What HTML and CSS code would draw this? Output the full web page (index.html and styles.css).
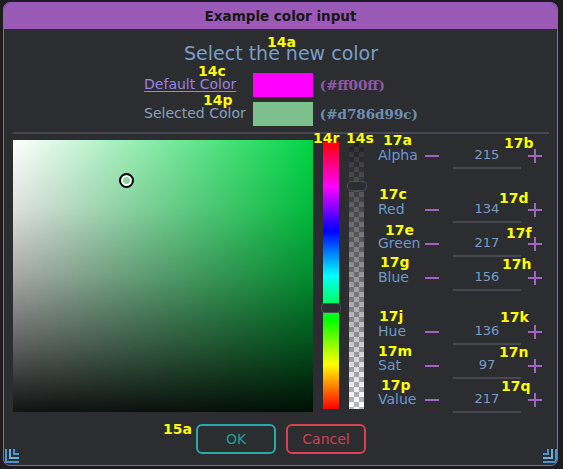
FILE: index.html
```html
<!DOCTYPE html>
<html>
<head>
<meta charset="utf-8">
<link rel="stylesheet" href="styles.css">
</head>
<body>
<div class="window">
  <div class="titlebar">Example color input</div>
  <div class="content">
    <div class="heading">Select the new color</div>
    <div class="compare">
      <a class="link">Default Color</a>
      <div class="swatch magenta"></div>
      <div class="hex hex-default">(#ff00ff)</div>
      <div class="sel-label">Selected Color</div>
      <div class="swatch selected"></div>
      <div class="hex hex-selected">(#d786d99c)</div>
    </div>
    <div class="sep"></div>
    <div class="main">
      <div class="picker"><div class="marker"></div></div>
      <div class="hue"><div class="handle hue-handle"></div></div>
      <div class="alpha"><div class="handle alpha-handle"></div></div>
      <div class="sliders">
        <div class="row"><span class="lbl">Alpha</span><span class="minus"></span><span class="val">215</span><span class="plus"></span></div>
        <div class="row group"><span class="lbl">Red</span><span class="minus"></span><span class="val">134</span><span class="plus"></span></div>
        <div class="row"><span class="lbl">Green</span><span class="minus"></span><span class="val">217</span><span class="plus"></span></div>
        <div class="row"><span class="lbl">Blue</span><span class="minus"></span><span class="val">156</span><span class="plus"></span></div>
        <div class="row group"><span class="lbl">Hue</span><span class="minus"></span><span class="val">136</span><span class="plus"></span></div>
        <div class="row"><span class="lbl">Sat</span><span class="minus"></span><span class="val">97</span><span class="plus"></span></div>
        <div class="row"><span class="lbl">Value</span><span class="minus"></span><span class="val">217</span><span class="plus"></span></div>
      </div>
    </div>
    <div class="buttons">
      <button class="btn ok">OK</button>
      <button class="btn cancel">Cancel</button>
    </div>
  </div>
  <svg class="grip grip-left" width="14" height="14" viewBox="0 0 14 14">
    <path d="M1 0V13H14" fill="none" stroke="#4f93cc" stroke-width="2"/>
    <path d="M5 0V9H14" fill="none" stroke="#6aaedf" stroke-width="2"/>
    <path d="M9 0V5H14" fill="none" stroke="#4f93cc" stroke-width="2"/>
  </svg>
  <svg class="grip grip-right" width="14" height="14" viewBox="0 0 14 14">
    <path d="M13 0V13H0" fill="none" stroke="#4f93cc" stroke-width="2"/>
    <path d="M9 0V9H0" fill="none" stroke="#6aaedf" stroke-width="2"/>
    <path d="M5 0V5H0" fill="none" stroke="#4f93cc" stroke-width="2"/>
  </svg>
</div>

<div class="notes">
  <span class="note n14a">14a</span>
  <span class="note n14c">14c</span>
  <span class="note n14p">14p</span>
  <span class="note n14r">14r</span>
  <span class="note n14s">14s</span>
  <span class="note n17a">17a</span>
  <span class="note n17b">17b</span>
  <span class="note n17c">17c</span>
  <span class="note n17d">17d</span>
  <span class="note n17e">17e</span>
  <span class="note n17f">17f</span>
  <span class="note n17g">17g</span>
  <span class="note n17h">17h</span>
  <span class="note n17j">17j</span>
  <span class="note n17k">17k</span>
  <span class="note n17m">17m</span>
  <span class="note n17n">17n</span>
  <span class="note n17p">17p</span>
  <span class="note n17q">17q</span>
  <span class="note n15a">15a</span>
</div>
</body>
</html>
```

FILE: styles.css
```css
* { box-sizing: border-box; }

html, body { margin: 0; }

body {
  position: relative;
  width: 563px;
  height: 469px;
  overflow: hidden;
  padding: 2px 0 0 3px;
  background: #1c1d20;
  font-family: "DejaVu Sans", sans-serif;
}

.window {
  position: relative;
  width: 555px;
  height: 464px;
  border: 1px solid #9b59b6;
  border-radius: 7px;
  background: #2b2d31;
  overflow: hidden;
  display: flex;
  flex-direction: column;
}

.titlebar {
  flex: none;
  height: 26px;
  background: #9b59b6;
  color: #161616;
  font-weight: bold;
  font-size: 13.5px;
  display: flex;
  align-items: center;
  justify-content: center;
}

.content {
  display: flex;
  flex-direction: column;
  padding: 13px 8px 0 9px;
}

.heading {
  font-size: 19px;
  line-height: 22px;
  color: #7a9fc6;
  text-align: center;
}

.compare {
  margin-top: 9px;
  display: grid;
  grid-template-columns: auto 60px auto;
  column-gap: 7px;
  row-gap: 5px;
  justify-content: center;
  align-items: center;
  font-size: 14px;
}

.link {
  color: #9a82e4;
  text-decoration: underline;
  text-underline-offset: 2px;
  margin-bottom: 3px;
}

.sel-label {
  color: #8aa1bb;
  margin-bottom: 3px;
}

.swatch { height: 24px; }
.magenta { background: #ff00ff; }
.selected { background: #7dbf8d; }

.hex {
  font-family: "DejaVu Serif", serif;
  font-weight: bold;
  font-size: 13.5px;
}
.hex-default { color: #8d5ba6; }
.hex-selected { color: #6f8fb2; }

.sep {
  margin-top: 6px;
  height: 2px;
  background: #46494e;
}

.main {
  margin-top: 6px;
  display: flex;
  align-items: flex-start;
}

.picker {
  position: relative;
  flex: none;
  width: 300px;
  height: 272px;
  background:
    linear-gradient(to bottom, rgba(0,0,0,0), rgba(0,0,0,0.12) 25%, rgba(0,0,0,0.34) 50%, rgba(0,0,0,0.62) 75%, rgba(0,0,0,0.93)),
    linear-gradient(to right, #fff, rgba(255,255,255,0)),
    #00d444;
}

.marker {
  position: absolute;
  left: 106px;
  top: 33px;
  width: 15px;
  height: 15px;
  border-radius: 50%;
  border: 2px solid #000;
  background: #8fd49c;
  box-shadow: inset 0 0 0 2px #fff;
}

.hue, .alpha {
  position: relative;
  flex: none;
  margin-top: 2px;
  height: 267px;
  margin-left: 10px;
}

.hue {
  width: 16px;
  background: linear-gradient(to bottom, #ff0000, #ff00ff, #0000ff, #00ffff, #00ff00, #ffff00, #ff0000);
}

.alpha {
  width: 15px;
  background:
    linear-gradient(to bottom, rgba(0,0,0,0.82), rgba(0,0,0,0)),
    conic-gradient(#b8b8b8 25%, #ffffff 0 50%, #b8b8b8 0 75%, #ffffff 0) 0 0 / 10px 10px;
}

.handle {
  position: absolute;
  left: -2px;
  width: 20px;
  height: 10px;
  border-radius: 4px;
  background: #2b2d31;
  border: 1px solid #4a4d53;
}
.hue-handle { top: 161px; }
.alpha-handle { top: 39px; }

.sliders {
  margin-top: 2px;
  margin-left: 14px;
  display: flex;
  flex-direction: column;
  gap: 7px;
}

.row {
  display: grid;
  grid-template-columns: 47px 14px 68px 14px;
  column-gap: 7px;
  height: 27px;
  align-items: center;
  font-size: 14px;
}
.row.group { margin-top: 20px; }

.row .minus { margin-left: -7px; }

.lbl {
  color: #6d98c9;
  margin-bottom: 2px;
}

.minus {
  display: block;
  width: 14px;
  height: 2px;
  background: #a263c1;
}

.plus {
  position: relative;
  display: block;
  width: 14px;
  height: 14px;
  background:
    linear-gradient(#a263c1, #a263c1) center / 14px 2px no-repeat,
    linear-gradient(#a263c1, #a263c1) center / 2px 14px no-repeat;
}

.val {
  height: 27px;
  border-bottom: 2px solid #46494e;
  color: #7b9dc4;
  font-size: 13px;
  display: flex;
  align-items: center;
  justify-content: center;
}

.buttons {
  margin-top: 11px;
  display: flex;
  justify-content: center;
  gap: 10px;
}

.btn {
  width: 80px;
  height: 30px;
  border: 2px solid;
  border-radius: 6px;
  background: transparent;
  font-family: "DejaVu Sans", sans-serif;
  font-size: 14px;
  padding: 0;
}
.ok { border-color: #26aaa3; color: #22a096; }
.cancel { border-color: #d8414f; color: #d23f4c; }

.grip { position: absolute; bottom: 2px; }
.grip-left { left: 1px; }
.grip-right { right: 0; }

.notes {
  position: absolute;
  left: 0;
  top: 0;
}

.note {
  position: absolute;
  font-family: "DejaVu Sans", sans-serif;
  font-weight: bold;
  font-size: 14px;
  line-height: 14px;
  color: #ffff00;
  white-space: nowrap;
}
.n14a { left: 267px; top: 35px; }
.n14c { left: 198px; top: 64px; }
.n14p { left: 203px; top: 93px; }
.n14r { left: 313px; top: 131px; }
.n14s { left: 346px; top: 131px; }
.n17a { left: 383px; top: 133px; }
.n17b { left: 504px; top: 136px; }
.n17c { left: 379px; top: 187px; }
.n17d { left: 499px; top: 191px; }
.n17e { left: 385px; top: 223px; }
.n17f { left: 506px; top: 226px; }
.n17g { left: 380px; top: 255px; }
.n17h { left: 502px; top: 257px; }
.n17j { left: 379px; top: 309px; }
.n17k { left: 500px; top: 310px; }
.n17m { left: 378px; top: 344px; }
.n17n { left: 499px; top: 345px; }
.n17p { left: 381px; top: 378px; }
.n17q { left: 501px; top: 379px; }
.n15a { left: 163px; top: 422px; }
```
